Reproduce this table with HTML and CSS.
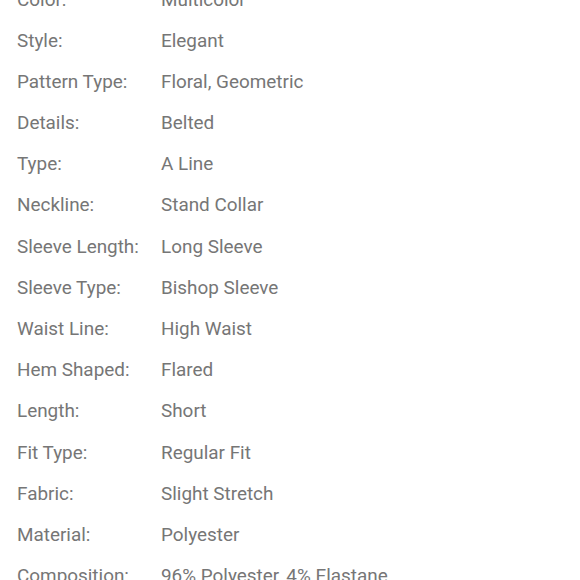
FILE: index.html
```html
<!DOCTYPE html>
<html>
<head>
<meta charset="utf-8">
<link rel="stylesheet" href="styles.css">
</head>
<body>
<dl class="specs">
  <div class="row"><dt>Color:</dt><dd>Multicolor</dd></div>
  <div class="row"><dt>Style:</dt><dd>Elegant</dd></div>
  <div class="row"><dt>Pattern Type:</dt><dd>Floral, Geometric</dd></div>
  <div class="row"><dt>Details:</dt><dd>Belted</dd></div>
  <div class="row"><dt>Type:</dt><dd>A Line</dd></div>
  <div class="row"><dt>Neckline:</dt><dd>Stand Collar</dd></div>
  <div class="row"><dt>Sleeve Length:</dt><dd>Long Sleeve</dd></div>
  <div class="row"><dt>Sleeve Type:</dt><dd>Bishop Sleeve</dd></div>
  <div class="row"><dt>Waist Line:</dt><dd>High Waist</dd></div>
  <div class="row"><dt>Hem Shaped:</dt><dd>Flared</dd></div>
  <div class="row"><dt>Length:</dt><dd>Short</dd></div>
  <div class="row"><dt>Fit Type:</dt><dd>Regular Fit</dd></div>
  <div class="row"><dt>Fabric:</dt><dd>Slight Stretch</dd></div>
  <div class="row"><dt>Material:</dt><dd>Polyester</dd></div>
  <div class="row"><dt>Composition:</dt><dd>96% Polyester, 4% Elastane</dd></div>
</dl>
</body>
</html>
```
FILE: styles.css
```css
html, body {
  margin: 0;
  padding: 0;
  background: #ffffff;
  overflow: hidden;
}
.specs {
  margin: -21.6px 0 0 0;
  padding: 0 0 0 17px;
  font-family: Roboto, "Noto Sans", sans-serif;
  font-size: 18.9px;
  color: #767676;
}
.row {
  display: grid;
  grid-template-columns: 144px auto;
  height: 41.2px;
  align-items: center;
}
.row dt, .row dd {
  margin: 0;
  white-space: nowrap;
}
```
